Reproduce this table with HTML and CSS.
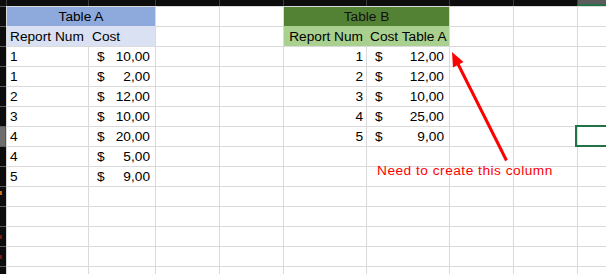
FILE: index.html
```html
<!DOCTYPE html>
<html>
<head>
<meta charset="utf-8">
<link rel="stylesheet" href="styles.css">
</head>
<body>
<div class="sheet">
  <div class="row hdr">
    <div class="ch corner"></div><div class="ch"></div><div class="ch"></div><div class="ch"></div><div class="ch"></div><div class="ch"></div><div class="ch"></div><div class="ch"></div><div class="ch"></div><div class="ch ch-sel"></div>
  </div>
  <div class="row">
    <div class="rh"></div>
    <div class="cell span2 fill-a1 center">Table A</div>
    <div class="cell"></div><div class="cell"></div>
    <div class="cell span2 fill-b1 center">Table B</div>
    <div class="cell"></div><div class="cell"></div><div class="cell"></div>
  </div>
  <div class="row">
    <div class="rh"></div>
    <div class="cell fill-a2 edge">Report Num</div>
    <div class="cell fill-a2">Cost</div>
    <div class="cell"></div><div class="cell"></div>
    <div class="cell fill-b2 edge right">Report Num</div>
    <div class="cell fill-b2 right">Cost Table A</div>
    <div class="cell"></div><div class="cell"></div><div class="cell"></div>
  </div>
  <div class="row">
    <div class="rh"></div>
    <div class="cell">1</div>
    <div class="cell money"><span>$</span><span>10,00</span></div>
    <div class="cell"></div><div class="cell"></div>
    <div class="cell right">1</div>
    <div class="cell money"><span>$</span><span>12,00</span></div>
    <div class="cell"></div><div class="cell"></div><div class="cell"></div>
  </div>
  <div class="row">
    <div class="rh"></div>
    <div class="cell">1</div>
    <div class="cell money"><span>$</span><span>2,00</span></div>
    <div class="cell"></div><div class="cell"></div>
    <div class="cell right">2</div>
    <div class="cell money"><span>$</span><span>12,00</span></div>
    <div class="cell"></div><div class="cell"></div><div class="cell"></div>
  </div>
  <div class="row">
    <div class="rh"></div>
    <div class="cell">2</div>
    <div class="cell money"><span>$</span><span>12,00</span></div>
    <div class="cell"></div><div class="cell"></div>
    <div class="cell right">3</div>
    <div class="cell money"><span>$</span><span>10,00</span></div>
    <div class="cell"></div><div class="cell"></div><div class="cell"></div>
  </div>
  <div class="row">
    <div class="rh"></div>
    <div class="cell">3</div>
    <div class="cell money"><span>$</span><span>10,00</span></div>
    <div class="cell"></div><div class="cell"></div>
    <div class="cell right">4</div>
    <div class="cell money"><span>$</span><span>25,00</span></div>
    <div class="cell"></div><div class="cell"></div><div class="cell"></div>
  </div>
  <div class="row">
    <div class="rh rh-sel"></div>
    <div class="cell">4</div>
    <div class="cell money"><span>$</span><span>20,00</span></div>
    <div class="cell"></div><div class="cell"></div>
    <div class="cell right">5</div>
    <div class="cell money"><span>$</span><span>9,00</span></div>
    <div class="cell"></div><div class="cell"></div><div class="cell"></div>
  </div>
  <div class="row">
    <div class="rh"></div>
    <div class="cell">4</div>
    <div class="cell money"><span>$</span><span>5,00</span></div>
    <div class="cell"></div><div class="cell"></div><div class="cell"></div><div class="cell"></div><div class="cell"></div><div class="cell"></div><div class="cell"></div>
  </div>
  <div class="row">
    <div class="rh"></div>
    <div class="cell">5</div>
    <div class="cell money"><span>$</span><span>9,00</span></div>
    <div class="cell"></div><div class="cell"></div><div class="cell"></div><div class="cell"></div><div class="cell"></div><div class="cell"></div><div class="cell"></div>
  </div>
  <div class="row">
    <div class="rh"><i class="frag"></i></div>
    <div class="cell"></div><div class="cell"></div><div class="cell"></div><div class="cell"></div><div class="cell"></div><div class="cell"></div><div class="cell"></div><div class="cell"></div><div class="cell"></div>
  </div>
  <div class="row">
    <div class="rh"></div>
    <div class="cell"></div><div class="cell"></div><div class="cell"></div><div class="cell"></div><div class="cell"></div><div class="cell"></div><div class="cell"></div><div class="cell"></div><div class="cell"></div>
  </div>
  <div class="row">
    <div class="rh"><i class="frag frag-dim"></i></div>
    <div class="cell"></div><div class="cell"></div><div class="cell"></div><div class="cell"></div><div class="cell"></div><div class="cell"></div><div class="cell"></div><div class="cell"></div><div class="cell"></div>
  </div>
  <div class="row">
    <div class="rh"><i class="frag frag-dim"></i></div>
    <div class="cell"></div><div class="cell"></div><div class="cell"></div><div class="cell"></div><div class="cell"></div><div class="cell"></div><div class="cell"></div><div class="cell"></div><div class="cell"></div>
  </div>
  <div class="row">
    <div class="rh"></div>
    <div class="cell"></div><div class="cell"></div><div class="cell"></div><div class="cell"></div><div class="cell"></div><div class="cell"></div><div class="cell"></div><div class="cell"></div><div class="cell"></div>
  </div>

  <div class="selection"></div>
  <div class="note">Need to create this column</div>
  <svg class="arrow" width="606" height="274" viewBox="0 0 606 274">
    <line x1="506.5" y1="160.5" x2="458" y2="64" stroke="#ff0000" stroke-width="3"/>
    <polygon points="452,52 463.5,62 453,67.5" fill="#ff0000"/>
  </svg>
</div>
</body>
</html>
```

FILE: styles.css
```css
html, body {
  margin: 0;
  padding: 0;
}
body {
  width: 606px;
  height: 274px;
  overflow: hidden;
  background: #ffffff;
  font-family: "Liberation Sans", Arial, sans-serif;
  font-size: 13.7px;
  color: #000000;
}
.sheet {
  position: relative;
  width: 606px;
  height: 274px;
  overflow: hidden;
}
.row {
  display: grid;
  grid-template-columns: 6px 82px 67px 64px 64px 83px 83px 64px 64px 1fr;
  height: 20px;
}
.row.hdr {
  height: 6px;
}
.ch {
  background: #0d0d0d;
  border-left: 1px solid #3c3c3c;
  box-sizing: border-box;
}
.ch.corner {
  border-left: none;
}
.ch-sel {
  background: #5c5c5c;
  border-bottom: 2px solid #217346;
}
.rh {
  background: #0d0d0d;
  border-top: 1px solid #5a5a5a;
  box-sizing: border-box;
  position: relative;
}
.rh-sel {
  background: #6e6e6e;
  border-right: 1px solid #217346;
}
.frag {
  position: absolute;
  left: 0;
  top: 4px;
  width: 2px;
  height: 4px;
  background: #d06a10;
}
.frag-dim {
  background: #7a1a10;
  top: 8px;
}
.cell {
  box-sizing: border-box;
  border-left: 1px solid #dadada;
  border-top: 1px solid #dadada;
  padding: 0 3px;
  line-height: 19px;
  white-space: nowrap;
  overflow: hidden;
}
.span2 {
  grid-column: span 2;
}
.center {
  text-align: center;
}
.right {
  text-align: right;
}
.fill-a1 {
  background: #8ea9db;
}
.fill-a2 {
  background: #d9e1f2;
  border-top-color: #d9e1f2;
  border-left-color: #d9e1f2;
}
.fill-b1 {
  background: #548235;
  color: #111111;
}
.fill-b2 {
  background: #a9d08e;
  border-top-color: #a9d08e;
  border-left-color: #a9d08e;
}
.fill-a2.edge,
.fill-b2.edge {
  border-left-color: #dadada;
}
.money {
  display: flex;
  justify-content: space-between;
  padding: 0 5px 0 8px;
}
.selection {
  position: absolute;
  left: 575px;
  top: 125px;
  width: 40px;
  height: 22px;
  box-sizing: border-box;
  border: 2px solid #217346;
}
.note {
  position: absolute;
  left: 377px;
  top: 161px;
  color: #ff0000;
  font-size: 13.7px;
  letter-spacing: 0.5px;
  line-height: 20px;
}
.arrow {
  position: absolute;
  left: 0;
  top: 0;
}
```
